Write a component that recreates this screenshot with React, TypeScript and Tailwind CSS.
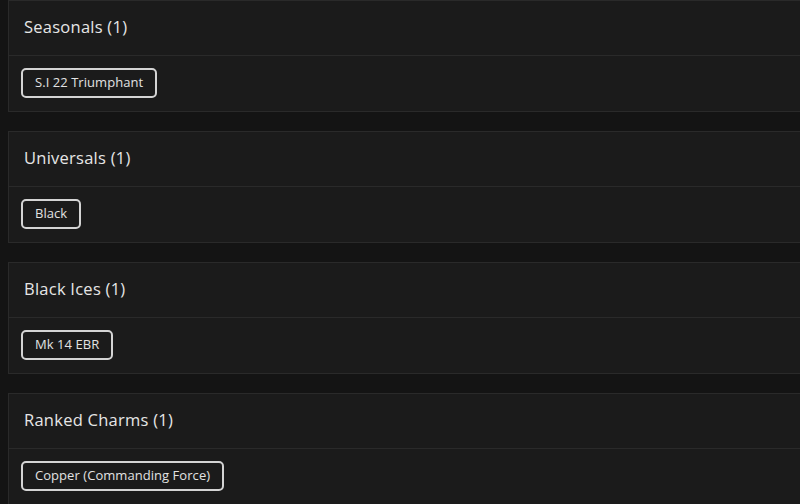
import React from "react";

const sections = [
  { title: "Seasonals (1)", items: ["S.I 22 Triumphant"] },
  { title: "Universals (1)", items: ["Black"] },
  { title: "Black Ices (1)", items: ["Mk 14 EBR"] },
  { title: "Ranked Charms (1)", items: ["Copper (Commanding Force)"] },
];

export default function App() {
  return (
    <div
      className="w-[800px] h-[504px] overflow-hidden bg-[#141414] pl-2 flex flex-col gap-[19px]"
      style={{ fontFamily: '"Open Sans", "Noto Sans", sans-serif' }}
    >
      {sections.map((s) => (
        <div key={s.title} className="w-[820px] shrink-0 bg-[#1b1b1b] border border-[#2a2a2a]">
          <div className="h-[55px] flex items-center pb-[2px] px-[15px] border-b border-[#2a2a2a]">
            <span className="text-[16.5px] font-medium text-[#e6e6e6] tracking-[0.25px]">{s.title}</span>
          </div>
          <div className="pt-3 pb-[13px] px-3 flex gap-2">
            {s.items.map((it) => (
              <span
                key={it}
                className="h-[30px] px-[12px] flex items-center rounded-[5px] border-2 border-[#d4d4d4] text-[13px] tracking-[0.05px] text-[#e2e2e2]"
              >
                {it}
              </span>
            ))}
          </div>
        </div>
      ))}
    </div>
  );
}
